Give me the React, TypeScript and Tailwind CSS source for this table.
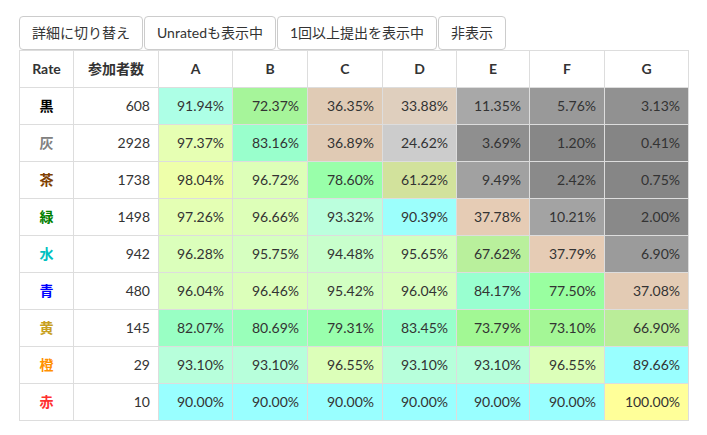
const ranks = [
  {
    name: "黒",
    color: "text-[#000000]",
    count: 608,
    cells: [
      ["91.94%", "bg-[#adffe6]"],
      ["72.37%", "bg-[#a6f59a]"],
      ["36.35%", "bg-[#e0cbb5]"],
      ["33.88%", "bg-[#dfcfbe]"],
      ["11.35%", "bg-[#a8a8a8]"],
      ["5.76%", "bg-[#999999]"],
      ["3.13%", "bg-[#919191]"],
    ],
  },
  {
    name: "灰",
    color: "text-[#808080]",
    count: 2928,
    cells: [
      ["97.37%", "bg-[#e6ffb3]"],
      ["83.16%", "bg-[#99ffcc]"],
      ["36.89%", "bg-[#e0cab4]"],
      ["24.62%", "bg-[#cccccc]"],
      ["3.69%", "bg-[#8f8f8f]"],
      ["1.20%", "bg-[#878787]"],
      ["0.41%", "bg-[#858585]"],
    ],
  },
  {
    name: "茶",
    color: "text-[#804000]",
    count: 1738,
    cells: [
      ["98.04%", "bg-[#eeffaa]"],
      ["96.72%", "bg-[#ddffb8]"],
      ["78.60%", "bg-[#99ffaa]"],
      ["61.22%", "bg-[#d2e29c]"],
      ["9.49%", "bg-[#a1a1a1]"],
      ["2.42%", "bg-[#8a8a8a]"],
      ["0.75%", "bg-[#868686]"],
    ],
  },
  {
    name: "緑",
    color: "text-[#008000]",
    count: 1498,
    cells: [
      ["97.26%", "bg-[#e4ffb4]"],
      ["96.66%", "bg-[#ddffb8]"],
      ["93.32%", "bg-[#bbffdd]"],
      ["90.39%", "bg-[#9cfffc]"],
      ["37.78%", "bg-[#e6ccb5]"],
      ["10.21%", "bg-[#a3a3a3]"],
      ["2.00%", "bg-[#898989]"],
    ],
  },
  {
    name: "水",
    color: "text-[#00c0c0]",
    count: 942,
    cells: [
      ["96.28%", "bg-[#dbffbb]"],
      ["95.75%", "bg-[#d6ffc0]"],
      ["94.48%", "bg-[#c8ffcc]"],
      ["95.65%", "bg-[#d4ffc0]"],
      ["67.62%", "bg-[#b9f09c]"],
      ["37.79%", "bg-[#e6ccb5]"],
      ["6.90%", "bg-[#9b9b9b]"],
    ],
  },
  {
    name: "青",
    color: "text-[#0000ff]",
    count: 480,
    cells: [
      ["96.04%", "bg-[#d9ffbd]"],
      ["96.46%", "bg-[#dcffba]"],
      ["95.42%", "bg-[#d2ffc2]"],
      ["96.04%", "bg-[#d9ffbd]"],
      ["84.17%", "bg-[#99ffd0]"],
      ["77.50%", "bg-[#99ffa0]"],
      ["37.08%", "bg-[#e3cbb4]"],
    ],
  },
  {
    name: "黄",
    color: "text-[#c8a020]",
    count: 145,
    cells: [
      ["82.07%", "bg-[#99ffc4]"],
      ["80.69%", "bg-[#99ffba]"],
      ["79.31%", "bg-[#99ffad]"],
      ["83.45%", "bg-[#99ffcc]"],
      ["73.79%", "bg-[#a2f894]"],
      ["73.10%", "bg-[#a4f796]"],
      ["66.90%", "bg-[#baed99]"],
    ],
  },
  {
    name: "橙",
    color: "text-[#ff9000]",
    count: 29,
    cells: [
      ["93.10%", "bg-[#b7ffdb]"],
      ["93.10%", "bg-[#b7ffdb]"],
      ["96.55%", "bg-[#dcffb9]"],
      ["93.10%", "bg-[#b7ffdb]"],
      ["93.10%", "bg-[#b7ffdb]"],
      ["96.55%", "bg-[#dcffb9]"],
      ["89.66%", "bg-[#99ffff]"],
    ],
  },
  {
    name: "赤",
    color: "text-[#ff3030]",
    count: 10,
    cells: [
      ["90.00%", "bg-[#99ffff]"],
      ["90.00%", "bg-[#99ffff]"],
      ["90.00%", "bg-[#99ffff]"],
      ["90.00%", "bg-[#99ffff]"],
      ["90.00%", "bg-[#99ffff]"],
      ["90.00%", "bg-[#99ffff]"],
      ["100.00%", "bg-[#ffff99]"],
    ],
  },
];

const problems = ["A", "B", "C", "D", "E", "F", "G"];
const buttons = ["詳細に切り替え", "Unratedも表示中", "1回以上提出を表示中", "非表示"];

export default function App() {
  return (
    <div className="min-h-[435px] bg-white pl-[19px] pt-[16px] text-[14px] leading-[20px] text-[#333333] font-['Lato','Noto_Sans_CJK_JP',sans-serif]">
      {/* Toggle buttons */}
      <div className="flex gap-[1px]">
        {buttons.map((label) => (
          <button
            key={label}
            className="h-[34px] px-[12px] rounded-[4px] border border-[#cccccc] bg-white text-[#333333]"
          >
            {label}
          </button>
        ))}
      </div>

      {/* Rate table */}
      <table className="table-fixed border-collapse w-[669px]">
        <colgroup>
          <col className="w-[54px]" />
          <col className="w-[85px]" />
          <col className="w-[74px]" />
          <col className="w-[75px]" />
          <col className="w-[75px]" />
          <col className="w-[74px]" />
          <col className="w-[73px]" />
          <col className="w-[75px]" />
          <col className="w-[84px]" />
        </colgroup>
        <thead>
          <tr>
            <th className="border border-[#dddddd] p-[8px] text-center font-bold">Rate</th>
            <th className="border border-[#dddddd] p-[8px] text-center font-bold">参加者数</th>
            {problems.map((p) => (
              <th key={p} className="border border-[#dddddd] p-[8px] text-center font-bold">
                {p}
              </th>
            ))}
          </tr>
        </thead>
        <tbody>
          {ranks.map((r) => (
            <tr key={r.name}>
              <td className={`border border-[#dddddd] p-[8px] text-center font-bold ${r.color}`}>{r.name}</td>
              <td className="border border-[#dddddd] p-[8px] text-right">{r.count}</td>
              {r.cells.map(([v, bg], i) => (
                <td key={i} className={`border border-[#dddddd] p-[8px] text-right ${bg}`}>
                  {v}
                </td>
              ))}
            </tr>
          ))}
        </tbody>
      </table>
    </div>
  );
}
